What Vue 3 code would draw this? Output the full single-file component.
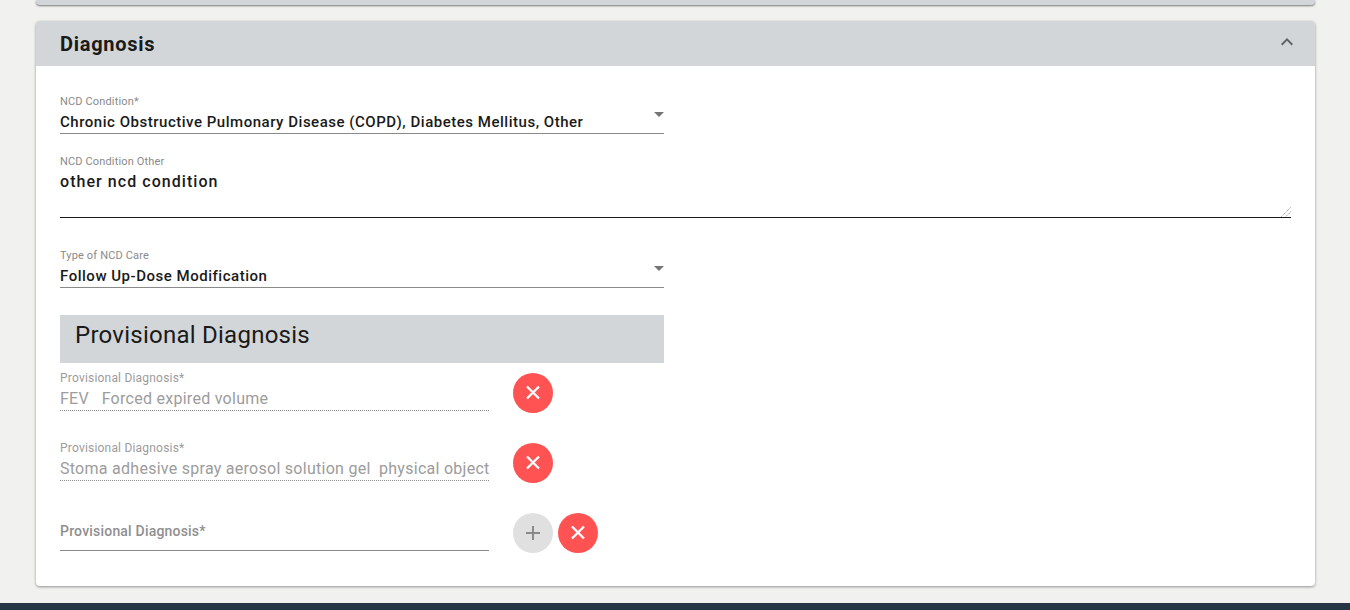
<template>
  <div class="page">
    <div class="prev-card"></div>

    <section class="card">
      <header class="card-head">
        <h2>Diagnosis</h2>
        <svg class="chevron" width="24" height="24" viewBox="0 0 24 24">
          <path d="M7.41 15.41 12 10.83l4.59 4.58L18 14l-6-6-6 6z" fill="#5f6368" />
        </svg>
      </header>

      <div class="card-body">
        <div class="select-field first">
          <label>NCD Condition*</label>
          <div class="value">Chronic Obstructive Pulmonary Disease (COPD), Diabetes Mellitus, Other</div>
          <span class="arrow"></span>
        </div>

        <div class="textarea-field">
          <label>NCD Condition Other</label>
          <div class="area-value">other ncd condition</div>
          <svg class="grip" width="10" height="10" viewBox="0 0 10 10">
            <path d="M9.5 .5 .5 9.5M9.5 5 5 9.5" stroke="#777" stroke-width="1" stroke-dasharray="1 1" fill="none" />
          </svg>
        </div>

        <div class="select-field care">
          <label>Type of NCD Care</label>
          <div class="value">Follow Up-Dose Modification</div>
          <span class="arrow"></span>
        </div>

        <h3 class="sub-head">Provisional Diagnosis</h3>

        <div v-for="item in diagnoses" :key="item" class="dx-row">
          <div class="dx-field">
            <label>Provisional Diagnosis*</label>
            <div class="dx-value">{{ item }}</div>
          </div>
          <button class="round remove">
            <svg width="24" height="24" viewBox="0 0 24 24">
              <path d="M6 5.5 18 17.5M18 5.5 6 17.5" stroke="#fff" stroke-width="2.3" fill="none" />
            </svg>
          </button>
        </div>

        <div class="dx-row last">
          <div class="dx-empty">Provisional Diagnosis*</div>
          <button class="round add">
            <svg width="24" height="24" viewBox="0 0 24 24">
              <path d="M19 13h-6v6h-2v-6H5v-2h6V5h2v6h6z" fill="#8a8a8a" />
            </svg>
          </button>
          <button class="round remove">
            <svg width="24" height="24" viewBox="0 0 24 24">
              <path d="M6 5.5 18 17.5M18 5.5 6 17.5" stroke="#fff" stroke-width="2.3" fill="none" />
            </svg>
          </button>
        </div>
      </div>
    </section>

    <footer class="footer"></footer>
  </div>
</template>

<script setup>
const diagnoses = [
  "FEV\u00a0\u00a0\u00a0Forced expired volume",
  "Stoma adhesive spray aerosol solution gel\u00a0\u00a0physical object",
];
</script>

<style>
html,
body {
  margin: 0;
  background: #f1f1ef;
}
</style>

<style scoped>
.page {
  height: 610px;
  overflow: hidden;
  display: flex;
  flex-direction: column;
  font-family: Roboto, "Liberation Sans", sans-serif;
  color: #1a1a1a;
}

.prev-card {
  flex: none;
  height: 5px;
  margin: 0 35px 16px 36px;
  background: #d3d6d9;
  border-radius: 0 0 4px 4px;
  box-shadow: 0 1px 2px rgba(0, 0, 0, 0.5);
}

.card {
  flex: none;
  height: 565px;
  margin: 0 35px 0 36px;
  background: #fff;
  border-radius: 4px;
  box-shadow: 0 1px 3px rgba(0, 0, 0, 0.4);
}

.card-head {
  height: 45px;
  padding: 0 16px 0 24px;
  display: flex;
  align-items: center;
  justify-content: space-between;
  background: #d3d6d9;
  border-radius: 4px 4px 0 0;
}

.card-head h2 {
  margin: 0;
  font-size: 20px;
  font-weight: 700;
  letter-spacing: 0.72px;
}

.chevron {
  margin-top: -4px;
}

.card-body {
  padding: 0 24px;
}

label {
  display: block;
  font-size: 11px;
  line-height: 12px;
  letter-spacing: 0.15px;
  color: #8a8a8a;
}

.select-field {
  position: relative;
  width: 604px;
  padding-top: 1px;
  border-bottom: 1px solid #8a8a8a;
  box-sizing: border-box;
}

.select-field.first {
  margin-top: 29px;
  height: 39px;
}

.select-field.care {
  margin-top: 31px;
  height: 39px;
}

.value {
  margin-top: 4px;
  font-size: 15px;
  line-height: 20px;
  font-weight: 500;
  letter-spacing: 0.52px;
}

.arrow {
  position: absolute;
  right: 0;
  top: 17px;
  border-left: 5px solid transparent;
  border-right: 5px solid transparent;
  border-top: 5px solid #757575;
}

.textarea-field {
  position: relative;
  height: 61px;
  margin-top: 21px;
  padding-top: 1px;
  border-bottom: 1px solid #1a1a1a;
}

.area-value {
  margin-top: 4px;
  font-size: 16px;
  line-height: 20px;
  font-weight: 500;
  letter-spacing: 1.05px;
}

.grip {
  position: absolute;
  right: 0;
  bottom: 0;
}

.sub-head {
  width: 604px;
  height: 48px;
  margin: 27px 0 0;
  padding: 8px 15px 0;
  box-sizing: border-box;
  font-size: 24px;
  line-height: 24px;
  font-weight: 400;
  letter-spacing: 0.25px;
  background: #d3d6d9;
}

.dx-row {
  display: flex;
  align-items: flex-start;
  gap: 5px;
  height: 40px;
  margin-top: 10px;
  margin-bottom: 30px;
}

.dx-row + .dx-row {
  margin-top: 0;
}

.dx-row.last {
  margin-bottom: 0;
}

.dx-field,
.dx-empty {
  flex: none;
  width: 429px;
  margin-right: 19px;
  box-sizing: border-box;
}

.dx-field {
  height: 38px;
  border-bottom: 1px dotted #8a8a8a;
  color: #9c9c9c;
}

.dx-field label {
  margin-top: -2px;
  font-size: 12px;
  line-height: 14px;
  letter-spacing: 0.2px;
  color: #9c9c9c;
}

.dx-value {
  margin-top: 4px;
  font-size: 16px;
  line-height: 20px;
  letter-spacing: 0.27px;
  white-space: nowrap;
  overflow: hidden;
}

.dx-empty {
  height: 38px;
  padding-top: 8px;
  font-size: 14px;
  line-height: 20px;
  font-weight: 500;
  letter-spacing: 0.2px;
  color: #8f8f8f;
  border-bottom: 1px solid #8a8a8a;
}

.round {
  flex: none;
  width: 40px;
  height: 40px;
  padding: 0;
  border: 0;
  border-radius: 50%;
  display: flex;
  align-items: center;
  justify-content: center;
}

.remove {
  background: #ff5252;
}

.add {
  background: #e0e0e0;
}

.footer {
  flex: none;
  height: 7px;
  margin-top: 17px;
  background: #263645;
}
</style>
